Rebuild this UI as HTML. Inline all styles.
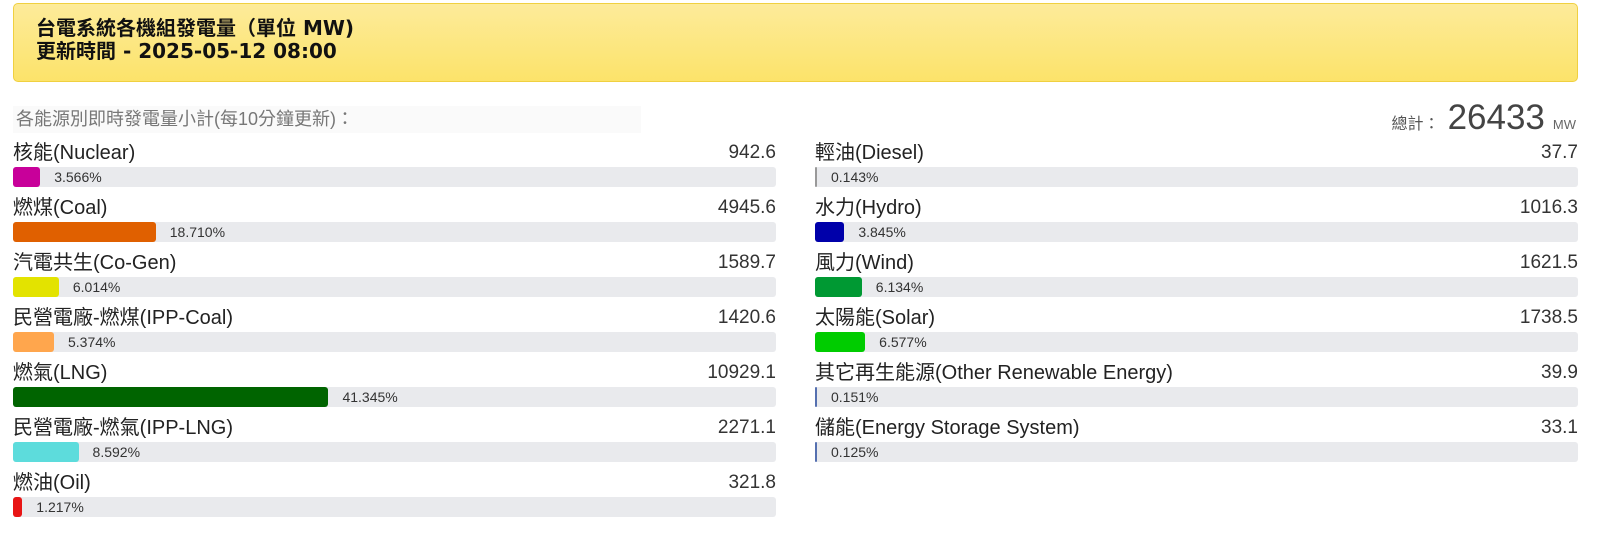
<!DOCTYPE html>
<html><head><meta charset="utf-8"><style>
body{margin:0;width:1600px;height:546px;background:#fff;font-family:"Liberation Sans","Noto Sans CJK TC",sans-serif;position:relative;overflow:hidden;color:#222}
.hdr{position:absolute;left:13px;top:3px;width:1565px;height:79px;background:linear-gradient(#fdeb9a,#fce36a);border:1px solid #f0d040;border-radius:5px;box-sizing:border-box}
.hdr div{position:absolute;left:22px;font-weight:bold;font-size:20px;color:#111;line-height:22px;font-family:"DejaVu Sans","Noto Sans CJK TC",sans-serif}
.sub{position:absolute;left:13px;top:106px;width:625px;height:27px;background:#fafafa;color:#777;font-size:18px;line-height:27px;padding-left:3px}
.tot{position:absolute;right:24px;top:98px;color:#555;font-size:16px}
.tot b{font-weight:normal;font-size:35px;color:#444;margin:0 8px}
.tot span{font-size:13px;color:#666}
.row{position:absolute;width:763px;height:55px}
.lab{position:absolute;left:0;top:0;font-size:20px;line-height:24px;color:#222}
.val{position:absolute;right:0;top:0;font-size:19px;line-height:24px;color:#333}
.trk{position:absolute;left:0;top:26px;width:100%;height:20px;background:#e9eaed;border-radius:3px}
.bar{position:absolute;left:0;top:0;height:20px;border-radius:3px}
.pct{position:absolute;top:2px;font-size:14px;line-height:17px;color:#333}
</style></head><body>
<div class="hdr"><div style="top:13px">台電系統各機組發電量（單位 MW)</div><div style="top:36px">更新時間 - 2025-05-12 08:00</div></div>
<div class="sub">各能源別即時發電量小計(每10分鐘更新)：</div>
<div class="tot">總計：<b>26433</b><span>MW</span></div>
<div id="c"></div>
<script>
var L=[["核能(Nuclear)","942.6",3.566,"#c8009a"],["燃煤(Coal)","4945.6",18.710,"#e06000"],["汽電共生(Co-Gen)","1589.7",6.014,"#e3e300"],["民營電廠-燃煤(IPP-Coal)","1420.6",5.374,"#ffa64d"],["燃氣(LNG)","10929.1",41.345,"#006400"],["民營電廠-燃氣(IPP-LNG)","2271.1",8.592,"#5ddcdc"],["燃油(Oil)","321.8",1.217,"#e81515"]];
var R=[["輕油(Diesel)","37.7",0.143,"#999"],["水力(Hydro)","1016.3",3.845,"#0000aa"],["風力(Wind)","1621.5",6.134,"#009933"],["太陽能(Solar)","1738.5",6.577,"#00cc00"],["其它再生能源(Other Renewable Energy)","39.9",0.151,"#5570b0"],["儲能(Energy Storage System)","33.1",0.125,"#5570b0"]];
var h="";
function add(a,x){a.forEach(function(r,i){var w=Math.max(2,763*r[2]/100);
h+='<div class="row" style="left:'+x+'px;top:'+(141+i*55)+'px"><div class="lab">'+r[0]+'</div><div class="val">'+r[1]+'</div><div class="trk"><div class="bar" style="width:'+w+'px;background:'+r[3]+'"></div><div class="pct" style="left:'+(w+14)+'px">'+r[2].toFixed(3)+'%</div></div></div>';});}
add(L,13);add(R,815);
document.getElementById("c").innerHTML=h;
</script>
</body></html>
